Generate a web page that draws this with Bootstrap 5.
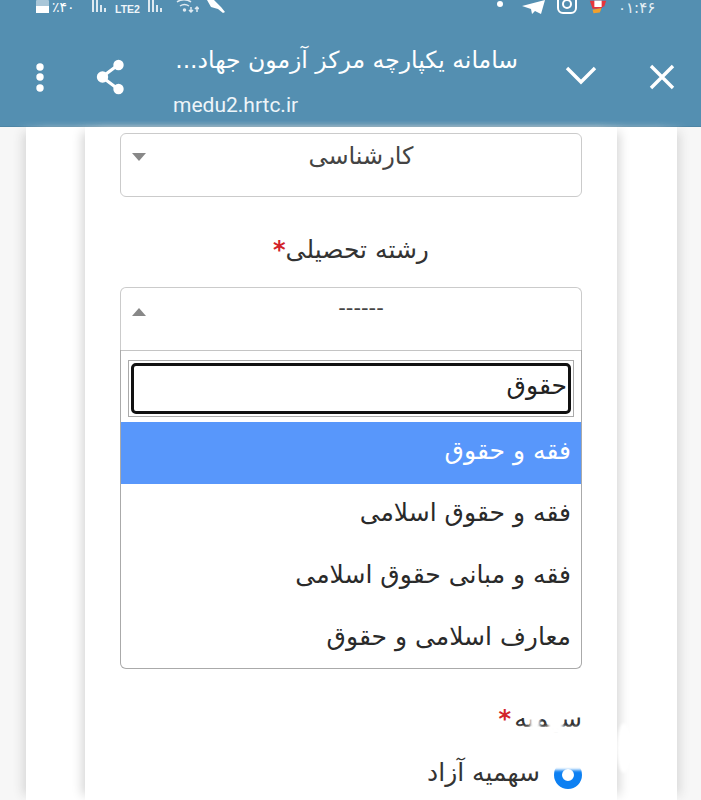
<!DOCTYPE html>
<html lang="fa">
<head>
    <meta charset="UTF-8">
    <meta name="viewport" content="width=device-width, initial-scale=1.0">
    <title>medu2.hrtc.ir</title>
    <link href="https://cdn.jsdelivr.net/npm/bootstrap@5.3.0/dist/css/bootstrap.min.css" rel="stylesheet">
    <style>
        html, body { height: 800px; overflow: hidden; }
        body { font-family: "DejaVu Sans", "Noto Sans", sans-serif; background: #f7f7f7; color: #333; }
        .app-head { height: 127px; background: #548fb1; color: #fff; border-bottom: 1px solid #4d85a5; }
        .status-row { height: 18px; overflow: hidden; padding: 0 41px 0 35px; font-size: 14px; line-height: 14px; }
        .status-row svg { display: block; }
        .status-left { gap: 6px; }
        .status-right { gap: 10px; }
        .status-clock { font-size: 15px; line-height: 18px; margin-top: -1px; width: 42px; color: #e4eef4; white-space: nowrap; }
        .lte-mark { font: 700 10.5px/8px "Liberation Sans", sans-serif; margin-top: 5px; width: 26px; color: #eef5f9; }
        .head-main { height: 108px; padding-right: 26px; }
        .head-dots { width: 80px; padding-left: 34px; margin-top: -4px; }
        .head-share { width: 93px; padding-left: 16px; margin-top: -4px; }
        .head-title { width: 353px; padding-top: 26px; }
        .title-line { font-size: 23.5px; line-height: 32px; white-space: nowrap; direction: rtl; text-align: right; width: 345px; }
        .title-url { font: 400 21px/24px "Roboto", sans-serif; margin-top: 17px; color: #eef5f9; }
        .head-actions { gap: 52px; margin-top: -4px; }
        .page-shell { width: 651px; margin-left: 26px; height: 673px; background: #fff; box-shadow: -8px 0 10px -5px #d6d6d6, 8px 0 10px -5px #d8d8d8; }
        .form-sheet { width: 532px; margin-left: 59px; height: 673px; background: #fff; padding: 6px 35px 0; box-shadow: -8px 0 10px -5px #d6d6d6, 8px 0 10px -5px #d8d8d8; position: relative; }
        .pick-box { border: 1px solid #cbcbcb; border-radius: 6px; height: 64px; position: relative; text-align: center; }
        .pick-value { font-size: 24px; line-height: 44px; padding-left: 20px; color: #444; }
        .pick-open { height: 63px; border-bottom-left-radius: 0; border-bottom-right-radius: 0; }
        .pick-open .pick-value { font-size: 21px; line-height: 40px; padding-left: 20px; }
        .pick-arrow { position: absolute; left: 11px; top: 19px; width: 0; height: 0; border-left: 7px solid transparent; border-right: 7px solid transparent; border-top: 8px solid #888; }
        .pick-open .pick-arrow { border-top: 0; border-bottom: 8px solid #888; top: 20px; }
        .field-label { font-size: 25px; line-height: 32px; margin: 37px 0 21px; color: #333; text-align: center; direction: rtl; }
        .req-star { color: #d2232a; font-size: 24px; font-weight: 700; }
        .drop-panel { border: 1px solid #aaa; border-top: 0; border-radius: 0 0 6px 6px; height: 319px; overflow: hidden; }
        .search-wrap { height: 72px; padding: 9px 7px 0; border-top: 1px solid #c4c4c4; }
        .search-field { height: 57px; border: 1px solid #aaa; padding: 2px; }
        .search-inner { width: 100%; height: 100%; border: 3px solid #111; border-radius: 5px; font: 25px/1 "DejaVu Sans", sans-serif; text-align: right; direction: rtl; padding: 0 1px 6px 0; color: #222; background: #fff; outline: 0; }
        .drop-item { height: 62px; font-size: 25px; line-height: 58px; padding: 0 10px; color: #2a2a2a; text-align: right; direction: rtl; white-space: nowrap; }
        .drop-item.is-hot { background: #5897fb; color: #fff; }
        .quota-label { font-size: 25px; line-height: 32px; margin-top: 34px; text-align: right; direction: rtl; color: #333; }
        .quota-label .req-star { margin-right: 3px; }
        .quota-row { margin-top: 22px; font-size: 25px; line-height: 30px; direction: rtl; }
        .quota-dot { width: 28px; height: 28px; border-radius: 50%; border: 8px solid #0d80f2; background: #fff; margin-left: 14px; margin-top: 4px; flex: none; }
        .smudge { position: absolute; background: #fff; filter: blur(1.5px); }
        .smudge-a { left: 463px; top: 578px; width: 15px; height: 26px; }
        .smudge-b { left: 445px; top: 578px; width: 10px; height: 26px; }
        .smudge-c { left: 425px; top: 600px; width: 74px; height: 8px; }
        .smudge-d { left: 532px; top: 596px; width: 14px; height: 50px; border-radius: 50%; }
        .smudge-e { left: 464px; top: 618px; width: 40px; height: 25px; }
        .smudge-f { left: 432px; top: 608px; width: 60px; height: 14px; }
    </style>
</head>
<body>
    <header class="app-head" dir="ltr">
        <div class="status-row d-flex justify-content-between">
            <div class="status-left d-flex align-items-start">
                <svg width="50" height="14" viewBox="0 0 50 14"><rect x="1" y="0" width="13" height="13" rx="1" fill="#a9c6d8"/><rect x="1" y="6" width="13" height="7" fill="#fff"/><text x="17" y="12" font-size="14" fill="#fff" font-family="DejaVu Sans">٪۴۰</text></svg>
                <svg width="18" height="14" viewBox="0 0 18 14" fill="#dfeaf1"><rect x="1" y="0" width="2" height="12"/><rect x="5" y="0" width="2" height="12"/><rect x="9" y="5" width="2" height="7"/><rect x="13" y="8" width="2" height="4"/></svg>
                <span class="lte-mark">LTE2</span>
                <svg width="18" height="14" viewBox="0 0 18 14" fill="#dfeaf1"><rect x="1" y="0" width="2" height="12"/><rect x="5" y="0" width="2" height="12"/><rect x="9" y="5" width="2" height="7"/><rect x="13" y="8" width="2" height="4"/></svg>
                <svg class="ms-1" width="24" height="14" viewBox="0 0 24 14" fill="none" stroke="#dfeaf1" stroke-width="1.5"><path d="M2 2c4-3 10-3 14 0M5 6c3-2 6-2 9 0"/><path d="M16 7v5M22 12V7M20 9l2-2 2 2M14 10l2 2 2-2"/><circle cx="9.5" cy="10" r="1" fill="#dfeaf1"/></svg>
                <svg width="24" height="14" viewBox="0 0 24 14" fill="#fff"><path d="M2 0h7l7 7 4 5-2 1-5-4-7-2z"/></svg>
            </div>
            <div class="status-right d-flex align-items-start">
                <svg class="me-2" width="8" height="14" viewBox="0 0 8 14"><circle cx="4" cy="4" r="3" fill="#fff"/></svg>
                <svg width="24" height="14" viewBox="0 0 24 14" fill="#fff"><path d="M0 6 23 0l-4 14-6-3-3 3-1-5z"/></svg>
                <svg width="22" height="14" viewBox="0 0 22 14" fill="none" stroke="#fff" stroke-width="2"><rect x="2" y="-6" width="18" height="19" rx="5"/><circle cx="11" cy="4" r="4"/></svg>
                <svg width="20" height="14" viewBox="0 0 22 14"><path d="M2 0h18l-3 9H5z" fill="#e6343c"/><path d="M7 0h8v7H7z" fill="#fff"/><path d="M5 10l10-2-2 5-7 1z" fill="#f2a02c"/><path d="M15 8l3-2-2 6z" fill="#2b9fd8"/></svg>
                <span class="status-clock">۰۱:۴۶</span>
            </div>
        </div>
        <div class="head-main d-flex align-items-start">
            <div class="head-dots">
                <svg class="d-block" width="12" height="90" viewBox="0 0 12 90" fill="#fff"><circle cx="6" cy="53" r="3.7"/><circle cx="6" cy="63" r="3.7"/><circle cx="6" cy="74" r="3.7"/></svg>
            </div>
            <div class="head-share">
                <svg class="d-block" width="36" height="90" viewBox="0 0 36 90" fill="none"><path d="M22 51 6 63l16 12" stroke="#fff" stroke-width="3.2"/><circle cx="22.500" cy="51" r="5.200" fill="#fff"/><circle cx="6.500" cy="63" r="5.700" fill="#fff"/><circle cx="22.500" cy="75" r="5.200" fill="#fff"/></svg>
            </div>
            <div class="head-title">
                <div class="title-line">سامانه یکپارچه مرکز آزمون جهاد...</div>
                <div class="title-url">medu2.hrtc.ir</div>
            </div>
            <div class="head-actions d-flex ms-auto">
                <svg class="d-block" width="32" height="90" viewBox="0 0 32 90" fill="none" stroke="#fff" stroke-width="3.4"><path d="M2 54l14 14 14-14"/></svg>
                <svg class="d-block" width="26" height="90" viewBox="0 0 26 90" fill="none" stroke="#fff" stroke-width="3.4"><path d="M2 52l22 22M24 52 2 74"/></svg>
            </div>
        </div>
    </header>
    <div class="page-shell">
        <main class="form-sheet">
            <div class="pick-box">
                <div class="pick-value">کارشناسی</div>
                <span class="pick-arrow"></span>
            </div>
            <div class="field-label">رشته تحصیلی<span class="req-star">*</span></div>
            <div class="pick-box pick-open border-bottom-0">
                <div class="pick-value">------</div>
                <span class="pick-arrow"></span>
            </div>
            <div class="drop-panel">
                <div class="search-wrap">
                    <div class="search-field"><input class="search-inner" type="text" value="حقوق" dir="rtl"></div>
                </div>
                <div class="drop-item is-hot">فقه و حقوق</div>
                <div class="drop-item">فقه و حقوق اسلامی</div>
                <div class="drop-item">فقه و مبانی حقوق اسلامی</div>
                <div class="drop-item">معارف اسلامی و حقوق</div>
            </div>
            <div class="quota-label">سهمیه<span class="req-star">*</span></div>
            <div class="quota-row d-flex align-items-center">
                <span class="quota-dot"></span>
                <span>سهمیه آزاد</span>
            </div>
            <span class="smudge smudge-a"></span>
            <span class="smudge smudge-b"></span>
            <span class="smudge smudge-c"></span>
            <span class="smudge smudge-d"></span>
            <span class="smudge smudge-e"></span>
            <span class="smudge smudge-f"></span>
        </main>
    </div>
    <script src="https://cdn.jsdelivr.net/npm/bootstrap@5.3.0/dist/js/bootstrap.bundle.min.js"></script>
</body>
</html>
